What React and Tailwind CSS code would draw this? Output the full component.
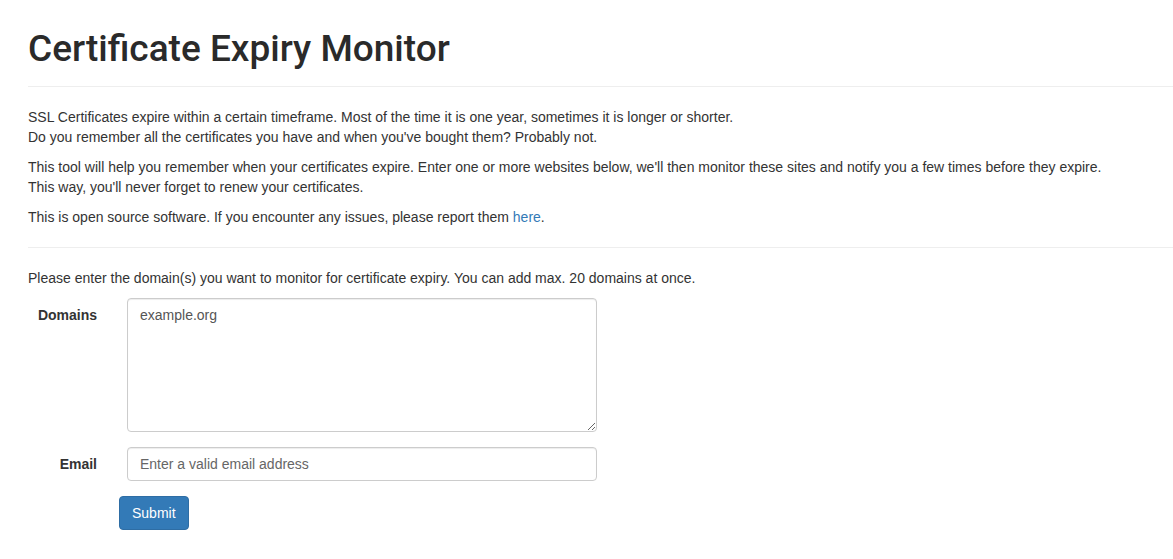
const Field = ({ label, children }) => (
    <div className="flex items-start mb-[15px]">
        <label className="w-[69px] shrink-0 text-right font-bold pt-[7px] leading-5">
            {label}
        </label>
        <div className="ml-[30px] w-[470px]">
            {children}
        </div>
    </div>
);

const App = () => {
    const inputClass = "block w-full border border-[#ccc] rounded-[4px] px-3 py-[6px] text-[14px] leading-5 text-[#555] placeholder:text-[#666] shadow-[inset_0_1px_1px_rgba(0,0,0,0.075)] outline-none bg-white";

    return (
        <div className="min-h-screen bg-white text-[#333] text-[14px] leading-5 font-['Liberation_Sans',Arial,sans-serif] pl-[28px]">
            <h1 className="pt-[26px] pb-[14px] text-[37px] leading-[46px] font-medium font-['Roboto','Liberation_Sans',sans-serif] text-[#2a2a2a] border-b border-[#eee] mb-[20px]">
                Certificate Expiry Monitor
            </h1>

            <p className="mb-[10px]">
                SSL Certificates expire within a certain timeframe. Most of the time it is one year, sometimes it is longer or shorter.
                <br />
                Do you remember all the certificates you have and when you've bought them? Probably not.
            </p>
            <p className="mb-[10px]">
                This tool will help you remember when your certificates expire. Enter one or more websites below, we'll then monitor these sites and notify you a few times before they expire.
                <br />
                This way, you'll never forget to renew your certificates.
            </p>
            <p className="mb-[20px]">
                This is open source software. If you encounter any issues, please report them <a href="#" className="text-[#337ab7]">here</a>.
            </p>

            <hr className="border-0 border-t border-[#eee] mb-[20px]" />

            <p className="mb-[10px]">
                Please enter the domain(s) you want to monitor for certificate expiry. You can add max. 20 domains at once.
            </p>

            <form onSubmit={e => e.preventDefault()}>
                <Field label="Domains">
                    <textarea
                        className={inputClass + " h-[134px]"}
                        defaultValue="example.org" />
                </Field>
                <Field label="Email">
                    <input
                        type="email"
                        className={inputClass + " h-[34px]"}
                        placeholder="Enter a valid email address" />
                </Field>
                <button
                    type="submit"
                    className="ml-[91px] h-[34px] px-3 bg-[#337ab7] border border-[#2e6da4] rounded-[4px] text-white text-[14px] leading-5">
                    Submit
                </button>
            </form>
        </div>
    )
};

export default App;
